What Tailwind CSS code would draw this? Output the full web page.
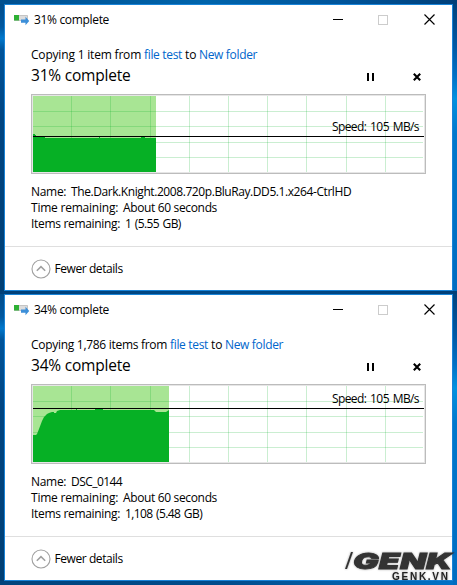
<!DOCTYPE html>
<html lang="en">
<head>
<meta charset="utf-8">
<title>File copy progress</title>
<script src="https://cdn.jsdelivr.net/npm/@tailwindcss/browser@4"></script>
</head>
<body class="w-[457px] h-[585px] overflow-hidden bg-[#004a86] font-['Open_Sans','Noto_Sans',sans-serif] text-[12px] leading-4 text-black">

<svg class="hidden">
  <symbol id="copy" viewBox="0 0 16 12">
    <path d="M0.5 1.5h13v5h-13z" fill="#dcdcdc" stroke="#c4c4c4"/>
    <path d="M0 1h5v5.500H0z" fill="#2eb135"/>
    <path d="M7 5.500h4.500V2.800L15.200 7l-3.700 4.200V8.700H7z" fill="#3c8fd9"/>
  </symbol>
  <symbol id="close" viewBox="0 0 11 11">
    <path d="M0.500 0.500l10 10M10.500 0.500l-10 10" stroke="#000" stroke-width="1.150" fill="none"/>
  </symbol>
  <symbol id="cancel" viewBox="0 0 8 8">
    <path d="M0.800 0.800l6.400 6.400M7.200 0.800L0.800 7.200" stroke="#000" stroke-width="2.100" fill="none"/>
  </symbol>
  <symbol id="up" viewBox="0 0 20 20">
    <circle cx="10" cy="10" r="9" fill="none" stroke="#a0a0a0" stroke-width="1.100"/>
    <path d="M5.800 11.700L10 7.600l4.200 4.100" fill="none" stroke="#a0a0a0" stroke-width="1.600"/>
  </symbol>
  <symbol id="grid" viewBox="0 0 391 76">
    <path d="M38.500 0v76M77.500 0v76M117.500 0v76M156.500 0v76M195.500 0v76M234.500 0v76M273.500 0v76M313.500 0v76M352.500 0v76M0 15.500h390M0 30.500h390M0 46.500h390M0 61.500h390" stroke="#06b025" stroke-opacity=".21" fill="none"/>
  </symbol>
</svg>

<div class="relative w-[457px] h-[585px] pt-1 pl-1 flex flex-col gap-[3px] bg-[linear-gradient(90deg,#00447c,#004c8c_50%,#0072c8)]">
  <div class="absolute inset-x-0 top-0 h-1 bg-[linear-gradient(90deg,#00508f,#0064ab_45%,#00549a_75%,#003f78)]"></div>
  <div class="absolute left-0 top-1 w-1 h-[287px] bg-[linear-gradient(180deg,#004c8a,#0058a0_8%,#0078cc_12%,#00549a_16%,#004582_40%,#003f74)]"></div>
  <div class="absolute left-0 top-[294px] w-1 h-[287px] bg-[linear-gradient(180deg,#004c8a,#0058a0_8%,#0078cc_12%,#00549a_16%,#004582_40%,#003f74)]"></div>
  <div class="absolute left-[453px] top-1 w-1 h-[287px] bg-[linear-gradient(180deg,#00427c,#0058a4_15%,#0070c4_25%,#0092e0_33%,#0078cc_45%,#006cc0)]"></div>
  <div class="absolute left-[453px] top-[291px] w-1 h-[294px] bg-[linear-gradient(180deg,#00427c,#0058a4_15%,#0070c4_25%,#0092e0_33%,#0078cc_45%,#006cc0)]"></div>
  <div class="absolute inset-x-0 top-[291px] h-[3px] bg-[linear-gradient(90deg,#004078,#004a88_50%,#003f78)]"></div>

  <section class="relative w-[449px] h-[287px] border border-[#1883d7] bg-white flex flex-col">
    <header class="h-[30px] flex items-center pl-[9px] pr-[17px]">
      <svg class="w-4 h-3 mr-1"><use href="#copy"/></svg>
      <span class="tracking-[-0.33px] flex-1">31% complete</span>
      <span class="w-[10px] h-px bg-black mt-[-1px] mr-[35px]"></span>
      <span class="w-[10px] h-[10px] border border-[#cccccc] mt-[-1px] mr-[36px]"></span>
      <svg class="w-[11px] h-[11px] mt-[-1px]"><use href="#close"/></svg>
    </header>
    <main class="pl-[26px] h-[211px]">
      <p class="mt-3 h-4 flex whitespace-pre"><span class="w-[113px] tracking-[-0.19px]">Copying 1 item from </span><span class="w-[41px] tracking-[-0.33px] text-[#0066cc]">file test</span><span class="w-[14px]">to</span><span class="tracking-[-0.33px] text-[#0066cc]">New folder</span></p>
      <div class="mt-[3px] h-5 flex items-center pr-[31px]">
        <h1 class="flex-1 text-[15.500px] leading-5 -mt-[2px] tracking-[-0.2px]">31% complete</h1>
        <span class="w-[7px] h-2 border-x-2 border-black mt-[2px] mr-[39px]"></span>
        <svg class="w-2 h-2 mt-[2px]"><use href="#cancel"/></svg>
      </div>
      <div class="mt-2 w-[395px] h-20 border border-[#bcbcbc] shadow-[inset_0_0_0_1px_#e6e6e6] p-px relative">
        <svg class="w-[391px] h-[76px]" viewBox="0 0 391 76">
          <path d="M0 0h123v76H0z" fill="#a8e594"/>
          <use href="#grid" width="391" height="76"/>
          <path d="M0 38h2v1h1v2h9v1h54v-1h1v1h41v-1h4v1h11v34H0z" fill="#06b025"/>
          <path d="M0 40h391v1H0z"/>
        </svg>
        <span class="absolute left-[300px] top-6 tracking-[-0.6px] [word-spacing:1.3px] whitespace-nowrap">Speed: 105 MB/s</span>
      </div>
      <dl class="mt-[10px]">
        <div class="flex"><dt class="w-10 tracking-[-0.3px]">Name:</dt><dd class="tracking-[-0.42px] whitespace-nowrap">The.Dark.Knight.2008.720p.BluRay.DD5.1.x264-CtrlHD</dd></div>
        <div class="flex"><dt class="w-[92px] tracking-[-0.22px]">Time remaining:</dt><dd class="tracking-[-0.35px]">About 60 seconds</dd></div>
        <div class="flex"><dt class="w-[94px] tracking-[-0.32px]">Items remaining:</dt><dd class="tracking-[-0.6px] [word-spacing:1px]">1 (5.55 GB)</dd></div>
      </dl>
    </main>
    <footer class="border-t border-[#dfdfdf] flex-1 flex items-center pl-[26px] gap-[4px]">
      <svg class="w-5 h-5 -ml-[0.5px]"><use href="#up"/></svg>
      <span class="tracking-[-0.43px]">Fewer details</span>
    </footer>
  </section>

  <section class="relative w-[449px] h-[287px] border border-[#1883d7] bg-white flex flex-col">
    <header class="h-[30px] flex items-center pl-[9px] pr-[17px]">
      <svg class="w-4 h-3 mr-1"><use href="#copy"/></svg>
      <span class="tracking-[-0.33px] flex-1">34% complete</span>
      <span class="w-[10px] h-px bg-black mt-[-1px] mr-[35px]"></span>
      <span class="w-[10px] h-[10px] border border-[#cccccc] mt-[-1px] mr-[36px]"></span>
      <svg class="w-[11px] h-[11px] mt-[-1px]"><use href="#close"/></svg>
    </header>
    <main class="pl-[26px] h-[211px]">
      <p class="mt-3 h-4 flex whitespace-pre"><span class="w-[139px] tracking-[-0.29px]">Copying 1,786 items from </span><span class="w-[41px] tracking-[-0.33px] text-[#0066cc]">file test</span><span class="w-[14px]">to</span><span class="tracking-[-0.33px] text-[#0066cc]">New folder</span></p>
      <div class="mt-[3px] h-5 flex items-center pr-[31px]">
        <h1 class="flex-1 text-[15.500px] leading-5 -mt-[2px] tracking-[-0.2px]">34% complete</h1>
        <span class="w-[7px] h-2 border-x-2 border-black mt-[2px] mr-[39px]"></span>
        <svg class="w-2 h-2 mt-[2px]"><use href="#cancel"/></svg>
      </div>
      <div class="mt-2 w-[395px] h-20 border border-[#bcbcbc] shadow-[inset_0_0_0_1px_#e6e6e6] p-px relative">
        <svg class="w-[391px] h-[76px]" viewBox="0 0 391 76">
          <path d="M0 0h136v76H0z" fill="#a8e594"/>
          <use href="#grid" width="391" height="76"/>
          <path d="M0 49h3l1-1 2-5 3-8 2-4 3-3 2-1 3-1h2v1h2l1-2 3-1h16v-1h1v1h18v-1h8v1h51l2 2h10l3-2v52H0z" fill="#06b025"/>
          <path d="M0 22h391v1H0z"/>
        </svg>
        <span class="absolute left-[300px] top-[6px] tracking-[-0.6px] [word-spacing:1.3px] whitespace-nowrap">Speed: 105 MB/s</span>
      </div>
      <dl class="mt-[10px]">
        <div class="flex"><dt class="w-10 tracking-[-0.3px]">Name:</dt><dd class="tracking-[-0.55px]">DSC_0144</dd></div>
        <div class="flex"><dt class="w-[92px] tracking-[-0.22px]">Time remaining:</dt><dd class="tracking-[-0.35px]">About 60 seconds</dd></div>
        <div class="flex"><dt class="w-[94px] tracking-[-0.32px]">Items remaining:</dt><dd class="tracking-[-0.6px] [word-spacing:1px]">1,108 (5.48 GB)</dd></div>
      </dl>
    </main>
    <footer class="border-t border-[#dfdfdf] flex-1 flex items-center pl-[26px] gap-[4px]">
      <svg class="w-5 h-5 -ml-[0.5px]"><use href="#up"/></svg>
      <span class="tracking-[-0.43px]">Fewer details</span>
    </footer>
  </section>

  <svg class="absolute left-[340px] top-[545px] w-[117px] h-10 drop-shadow-[0_0_1px_rgba(0,0,0,0.35)]" viewBox="340 545 117 40">
    <path d="M345 569l6-17h2l-6 17z" fill="#333"/>
    <text x="353" y="568.500" font-family="Inter, Liberation Sans, sans-serif" font-size="22" font-weight="900" font-style="italic" fill="#333" stroke="#333" stroke-width="0.800" textLength="99" lengthAdjust="spacingAndGlyphs">GENK</text>
    <text x="392" y="580" font-family="Liberation Sans, Arial, sans-serif" font-size="10" font-weight="700" fill="#222" textLength="56" lengthAdjust="spacing">GENK.VN</text>
  </svg>
</div>
</body>
</html>
